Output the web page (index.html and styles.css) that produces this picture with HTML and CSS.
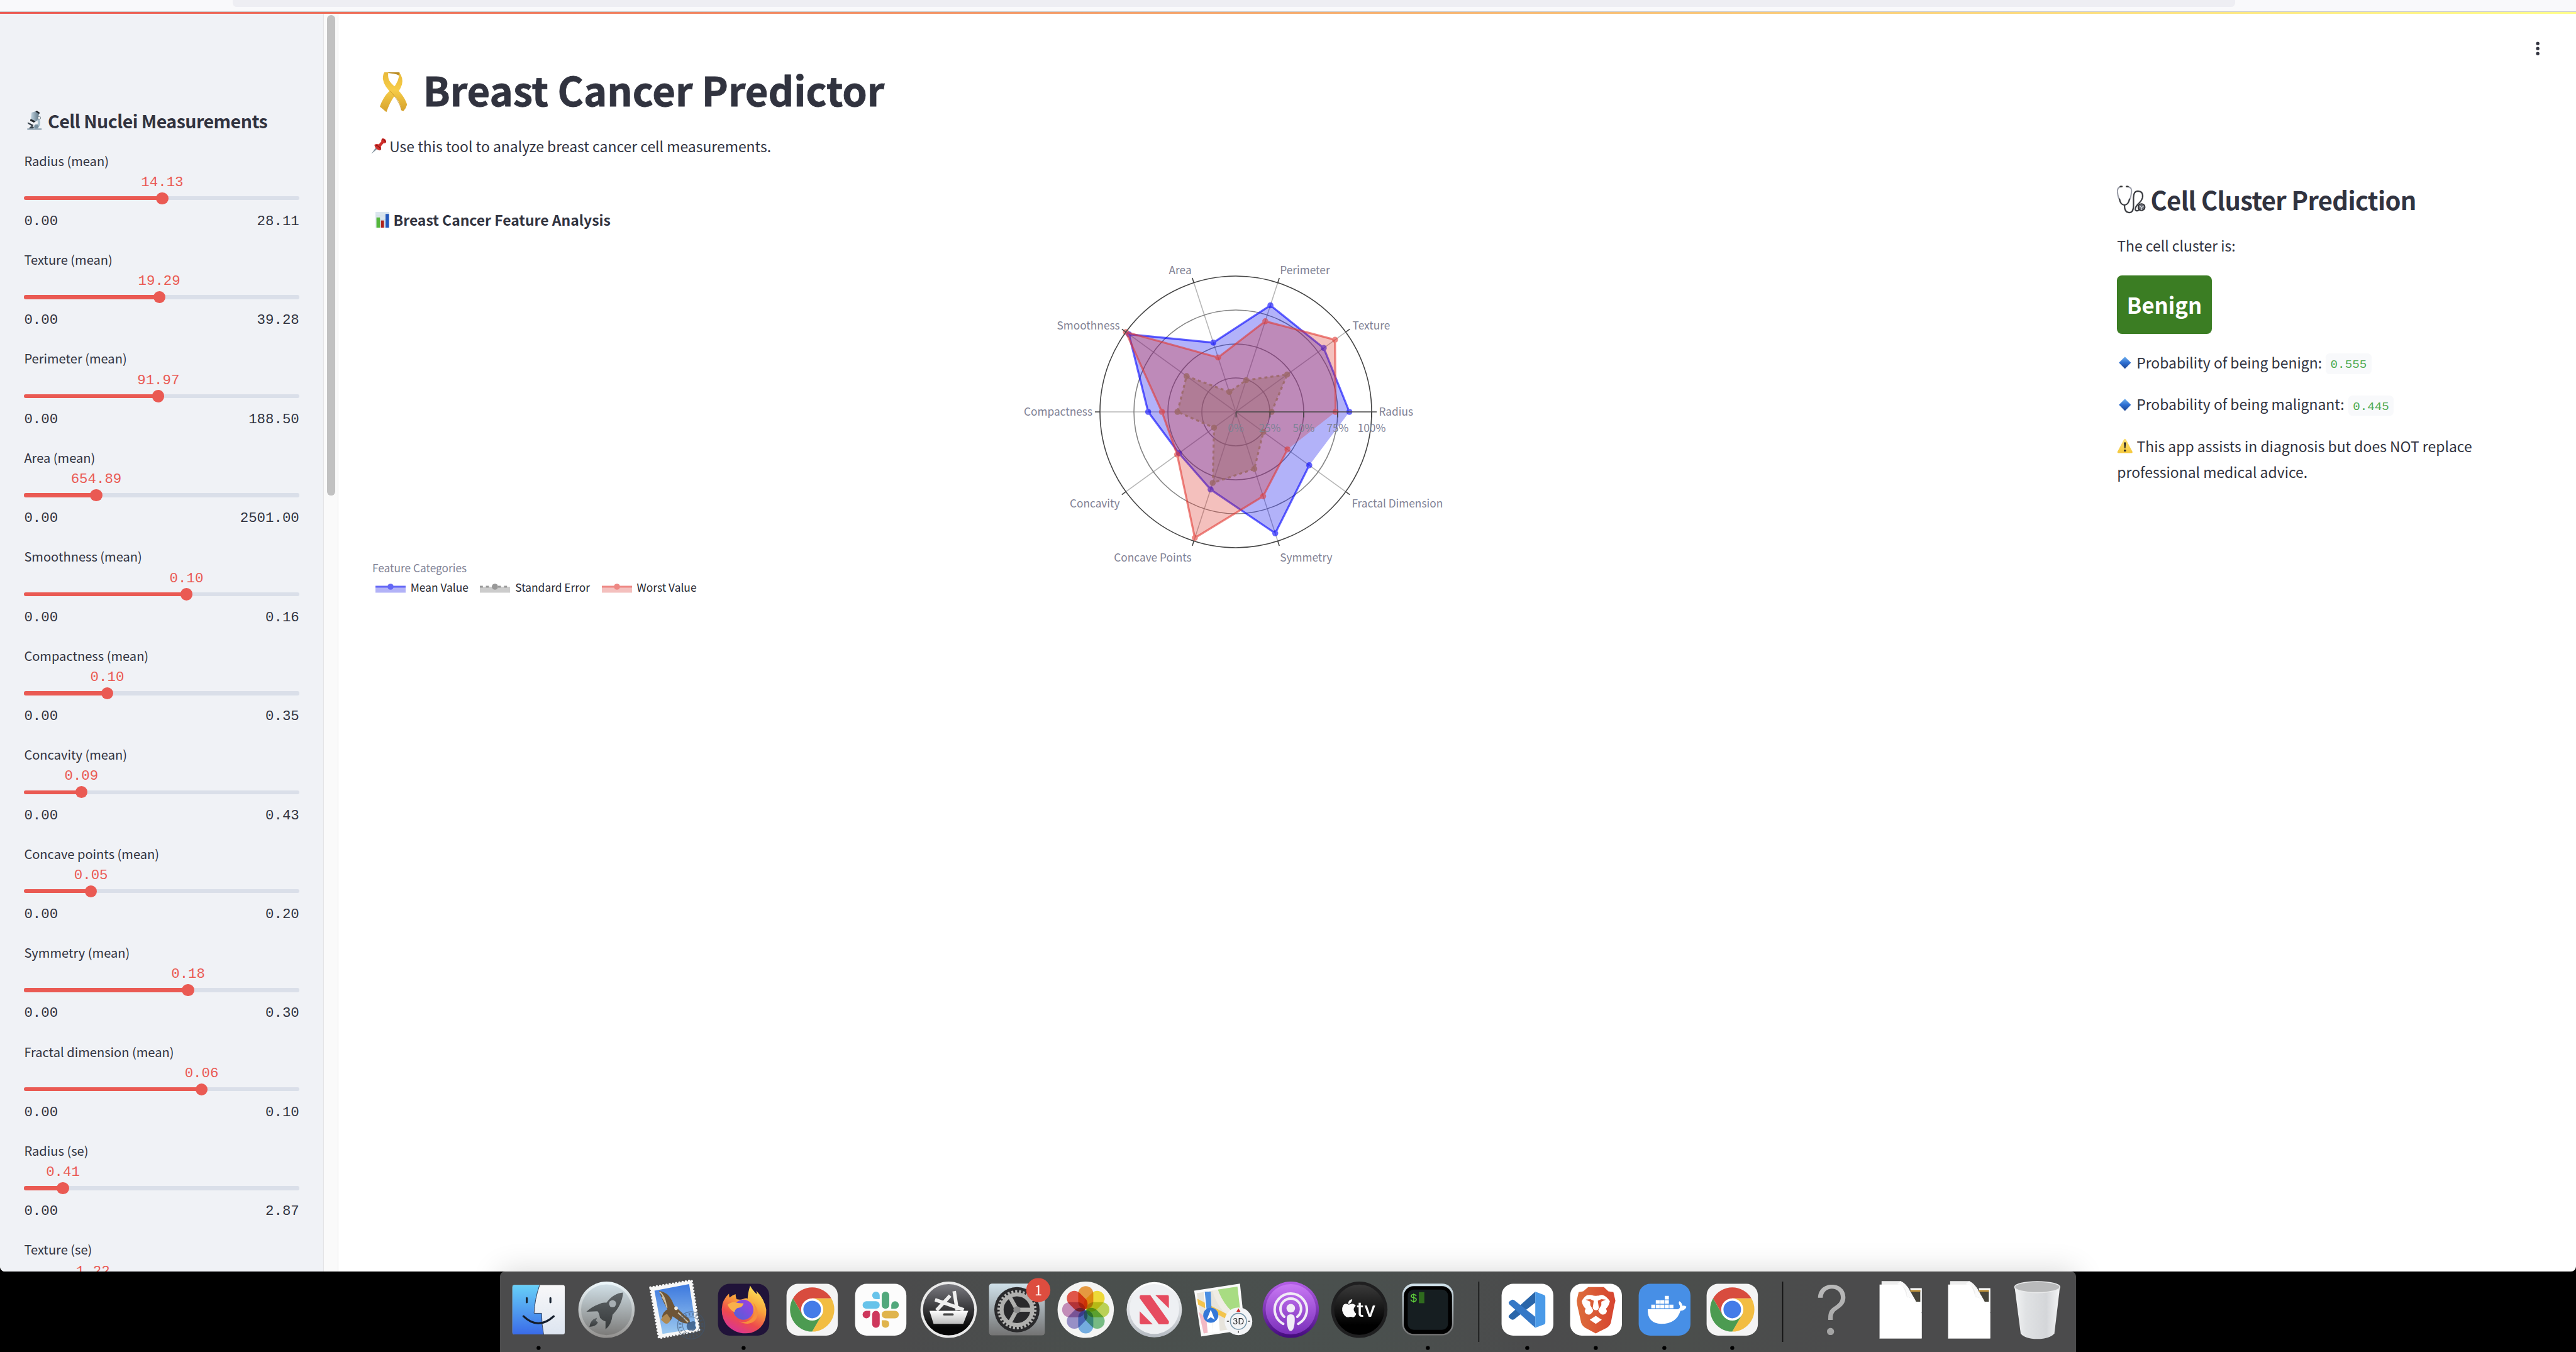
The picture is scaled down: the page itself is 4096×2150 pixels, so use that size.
FILE: index.html
```html
<!DOCTYPE html>
<html lang="en">
<head>
<meta charset="utf-8">
<title>Breast Cancer Predictor</title>
<link rel="stylesheet" href="styles.css">
</head>
<body>
<div class="window">
  <div class="toolbar"><div class="urlbar"></div></div>
  <div class="decoration"></div>
  <div class="app">
    <aside class="sidebar">
      <h2 class="side-title">
        <svg class="i-scope" viewBox="0 0 32 42"><defs><linearGradient id="mt" x1="0" x2="1"><stop offset="0" stop-color="#c3d6e2"/><stop offset="1" stop-color="#5d7484"/></linearGradient></defs><path d="M1 37h30v3H1z" fill="#8fa3b1"/><path d="M21 11q9 8 7 18-2 6-7 8h-9v-3q10-1 11-8 0-7-5-11z" fill="#a9bfcd"/><path d="M10 4l10-3 6 4-4 15-5 4-9-4z" fill="url(#mt)"/><path d="M18 2l3-2 6 4-1 3z" fill="#22262b"/><path d="M8 17l10 5-3 3-8-4z" fill="#1f2428"/><path d="M2 24l12 6-2 3L2 27zM9 32l6 2-2 3H4z" fill="#39444d"/><circle cx="26" cy="15" r="3" fill="#f2f5f7" stroke="#5b6a74"/><circle cx="20" cy="33" r="4.500" fill="#7890a0"/></svg>
        <span>Cell Nuclei Measurements</span>
      </h2>
      <div class="slider"><label>Radius (mean)</label><output style="margin-left:50.2%">14.13</output><div class="track"><i style="width:50.2%"></i></div><div class="range"><span>0.00</span><span>28.11</span></div></div>
      <div class="slider"><label>Texture (mean)</label><output style="margin-left:49.1%">19.29</output><div class="track"><i style="width:49.1%"></i></div><div class="range"><span>0.00</span><span>39.28</span></div></div>
      <div class="slider"><label>Perimeter (mean)</label><output style="margin-left:48.8%">91.97</output><div class="track"><i style="width:48.8%"></i></div><div class="range"><span>0.00</span><span>188.50</span></div></div>
      <div class="slider"><label>Area (mean)</label><output style="margin-left:26.2%">654.89</output><div class="track"><i style="width:26.2%"></i></div><div class="range"><span>0.00</span><span>2501.00</span></div></div>
      <div class="slider"><label>Smoothness (mean)</label><output style="margin-left:59%">0.10</output><div class="track"><i style="width:59%"></i></div><div class="range"><span>0.00</span><span>0.16</span></div></div>
      <div class="slider"><label>Compactness (mean)</label><output style="margin-left:30.2%">0.10</output><div class="track"><i style="width:30.2%"></i></div><div class="range"><span>0.00</span><span>0.35</span></div></div>
      <div class="slider"><label>Concavity (mean)</label><output style="margin-left:20.8%">0.09</output><div class="track"><i style="width:20.8%"></i></div><div class="range"><span>0.00</span><span>0.43</span></div></div>
      <div class="slider"><label>Concave points (mean)</label><output style="margin-left:24.3%">0.05</output><div class="track"><i style="width:24.3%"></i></div><div class="range"><span>0.00</span><span>0.20</span></div></div>
      <div class="slider"><label>Symmetry (mean)</label><output style="margin-left:59.6%">0.18</output><div class="track"><i style="width:59.6%"></i></div><div class="range"><span>0.00</span><span>0.30</span></div></div>
      <div class="slider"><label>Fractal dimension (mean)</label><output style="margin-left:64.5%">0.06</output><div class="track"><i style="width:64.5%"></i></div><div class="range"><span>0.00</span><span>0.10</span></div></div>
      <div class="slider"><label>Radius (se)</label><output style="margin-left:14.1%">0.41</output><div class="track"><i style="width:14.1%"></i></div><div class="range"><span>0.00</span><span>2.87</span></div></div>
      <div class="slider"><label>Texture (se)</label><output style="margin-left:25%">1.22</output></div>
    </aside>
    <div class="scrollbar"><div class="thumb"></div></div>
    <main class="main">
      <header class="header"><svg class="kebab" viewBox="0 0 48 48"><circle cx="24" cy="14" r="3.300"/><circle cx="24" cy="24" r="3.300"/><circle cx="24" cy="34" r="3.300"/></svg></header>
      <h1 class="title">
        <svg class="i-ribbon" viewBox="0 0 54 80"><defs><linearGradient id="rb" x1="0" x2="0" y1="0" y2="1"><stop offset="0" stop-color="#e8b93a"/><stop offset=".45" stop-color="#f7cd48"/><stop offset="1" stop-color="#d5a12c"/></linearGradient></defs><path d="M11 0h28l2 9Q36 3 20 2z" fill="#b98a22"/><path d="M38 0q9 10 6 24Q39 39 27 50 20 60 13 79L0 68Q6 50 18 38 35 26 38 8z" fill="url(#rb)"/><path d="M9 0h8q-3 14 8 24 24 22 29 40-2 8-7 13l-4-1Q41 58 26 44 8 28 6 13 6 4 9 0z" fill="url(#rb)"/><path d="M20 37q18 18 23 38" fill="none" stroke="#b98722" stroke-width="1.200" opacity=".7"/></svg>
        <span>Breast Cancer Predictor</span>
      </h1>
      <p class="intro">
        <svg class="i-pin" viewBox="0 0 30 31"><path d="M0 31l10-14 3 3z" fill="#7d8e9a"/><path d="M6 13q4-3 9-1l5-6q-1-3 2-6 7 0 8 7-2 3-6 3l-5 6q2 5-2 8-9-2-11-11z" fill="#cf2f2b"/><path d="M9 14q7 1 10 9M22 2q5 1 6 6" fill="none" stroke="#8f1517" stroke-width="1.500"/></svg>
        <span>Use this tool to analyze breast cancer cell measurements.</span>
      </p>
      <div class="columns">
        <section class="chart">
          <h3 class="chart-title"><svg class="i-bars" viewBox="0 0 28 32"><path d="M0 0h28v32H0z" fill="#dbe6ee"/><path d="M1 8h26M1 15h26" stroke="#c4d2dc"/><path d="M2 11h7v21H2z" fill="#55b73c"/><path d="M11 17h6v15h-6z" fill="#b0231d"/><path d="M20 4h7v28h-7z" fill="#2459bd"/></svg><span>Breast Cancer Feature Analysis</span></h3>
          <svg class="radar" viewBox="-475 -300 950 590">
            <g class="spokes">
              <path d="M-270 0H0M0 0L218.400-158.700M0 0L83.400-256.800M0 0L-83.400-256.800M0 0L-218.400-158.700M0 0L-218.400 158.700M0 0L-83.400 256.800M0 0L83.400 256.800M0 0L218.400 158.700"/>
            </g>
            <g class="rings"><circle r="67.500"/><circle r="135"/><circle r="202.500"/></g>
            <path class="blue-fill" d="M225.700 0L174.800-127L68.800-211.800L-44.700-137.700L-212.400-154.300L-174.200 0L-113 82.100L-50.100 154.200L78.400 241.300L146 106.100Z"/>
            <g class="blue"><path d="M225.700 0L174.800-127L68.800-211.800L-44.700-137.700L-212.400-154.300L-174.200 0L-113 82.100L-50.100 154.200L78.400 241.300L146 106.100"/><g><circle cx="225.700" r="6"/><circle cx="174.800" cy="-127" r="6"/><circle cx="68.800" cy="-211.800" r="6"/><circle cx="-44.700" cy="-137.700" r="6"/><circle cx="-212.400" cy="-154.300" r="6"/><circle cx="-174.200" r="6"/><circle cx="-113" cy="82.100" r="6"/><circle cx="-50.100" cy="154.200" r="6"/><circle cx="78.400" cy="241.300" r="6"/><circle cx="146" cy="106.100" r="6"/></g></g>
            <path class="gray-fill" d="M71.200 0L102.100-74.200L20.500-63.100L-12.900-39.700L-97.800-71.100L-116 0L-43.300 31.500L-45.900 141.200L36.800 113.400L54.800 39.800Z"/>
            <g class="gray"><path d="M71.200 0L102.100-74.200L20.500-63.100L-12.900-39.700L-97.800-71.100L-116 0L-43.300 31.500L-45.900 141.200L36.800 113.400L54.800 39.800"/><g><circle cx="71.200" r="6"/><circle cx="102.100" cy="-74.200" r="6"/><circle cx="20.500" cy="-63.100" r="6"/><circle cx="-12.900" cy="-39.700" r="6"/><circle cx="-97.800" cy="-71.100" r="6"/><circle cx="-116" r="6"/><circle cx="-43.300" cy="31.500" r="6"/><circle cx="-45.900" cy="141.200" r="6"/><circle cx="36.800" cy="113.400" r="6"/><circle cx="54.800" cy="39.800" r="6"/></g></g>
            <path class="red-fill" d="M198.400 0L197.200-143.300L58.600-180.200L-35.200-108.200L-218.400-158.700L-146.900 0L-116.600 84.800L-81.400 250.400L54.400 167.600L102.700 74.600Z"/>
            <g class="red"><path d="M198.400 0L197.200-143.300L58.600-180.200L-35.200-108.200L-218.400-158.700L-146.900 0L-116.600 84.800L-81.400 250.400L54.400 167.600L102.700 74.600"/><g><circle cx="198.400" r="6"/><circle cx="197.200" cy="-143.300" r="6"/><circle cx="58.600" cy="-180.200" r="6"/><circle cx="-35.200" cy="-108.200" r="6"/><circle cx="-218.400" cy="-158.700" r="6"/><circle cx="-146.900" r="6"/><circle cx="-116.600" cy="84.800" r="6"/><circle cx="-81.400" cy="250.400" r="6"/><circle cx="54.400" cy="167.600" r="6"/><circle cx="102.700" cy="74.600" r="6"/></g></g>
            <circle class="axis" r="270"/>
            <path class="axis" d="M218.400-158.700l8.100-5.900M83.400-256.800l3.100-9.500M-83.400-256.800l-3.100-9.500M-218.400-158.700l-8.100-5.900M-270 0h-10M-218.400 158.700l-8.100 5.900M-83.400 256.800l-3.100 9.500M83.400 256.800l3.100 9.500M218.400 158.700l8.100 5.900M.5 0v11M68 0v11M135 0v11M202.500 0v11M270 0v11"/>
            <path class="axis" d="M0 0H280"/>
            <g class="names">
              <text x="284.300" y="8">Radius</text><text x="232" y="-163.700">Texture</text><text x="87.800" y="-273.500">Perimeter</text><text class="end" x="-88" y="-273.500">Area</text><text class="end" x="-230.500" y="-163.700">Smoothness</text><text class="end" x="-285" y="8">Compactness</text><text class="end" x="-230.500" y="189.500">Concavity</text><text class="end" x="-88" y="297.500">Concave Points</text><text x="87.800" y="297.500">Symmetry</text><text x="230.500" y="189.500">Fractal Dimension</text>
              <text class="mid" x="0" y="40.500">0%</text><text class="mid" x="67.500" y="40.500">25%</text><text class="mid" x="135" y="40.500">50%</text><text class="mid" x="202.500" y="40.500">75%</text><text class="mid" x="270" y="40.500">100%</text>
            </g>
          </svg>
          <div class="legend-title">Feature Categories</div>
          <div class="legend">
            <div class="item"><svg class="key" viewBox="0 0 60 24"><path d="M0 5h60v12H0z" fill="#b2b2f7"/><path d="M0 5h60" stroke="#6468f6" stroke-width="4"/><circle cx="30" cy="5" r="6" fill="#6468f6"/></svg><span>Mean Value</span></div>
            <div class="item"><svg class="key" viewBox="0 0 60 24"><path d="M0 5h60v12H0z" fill="#ccc"/><path d="M0 5h60" stroke="#999" stroke-width="4" stroke-dasharray="6 6"/><circle cx="30" cy="5" r="6" fill="#999"/></svg><span>Standard Error</span></div>
            <div class="item"><svg class="key" viewBox="0 0 60 24"><path d="M0 5h60v12H0z" fill="#f4c0be"/><path d="M0 5h60" stroke="#ee8884" stroke-width="4"/><circle cx="30" cy="5" r="6" fill="#ee8884"/></svg><span>Worst Value</span></div>
          </div>
        </section>
        <section class="prediction">
          <h2 class="pred-title"><svg class="i-steth" viewBox="0 0 58 56"><g fill="none" stroke-linecap="round"><path d="M10 2Q1 2 1 12 2 24 6 29M20 2q10 1 9 10-1 12-4 17" stroke="#9b9ea9" stroke-width="2.600"/><path d="M5 27q2 11 10 12 8-1 10-12M15 39q0 14 9 15 9 0 9-14V24q0-13 9-13 11 1 9 13-2 7-10 14-6 7-4 11 3 3 8-1" stroke="#3b3d42" stroke-width="2.800"/><path d="M7 2h3M19 2h3" stroke="#333" stroke-width="3"/></g><circle cx="49" cy="43" r="6.800" fill="#6b6e76" stroke="#26272b" stroke-width="2"/><path d="M45 40l4 4 4-3M49 44v5" stroke="#d6d9df" stroke-width="1.500" fill="none"/></svg><span>Cell Cluster Prediction</span></h2>
          <p class="text lead">The cell cluster is:</p>
          <div class="badge">Benign</div>
          <p class="text prob"><svg class="i-gem" viewBox="0 0 32 32"><defs><linearGradient id="gm" x1="0" x2="0" y1="0" y2="1"><stop offset="0" stop-color="#6fb0ee"/><stop offset=".5" stop-color="#2e6fd2"/><stop offset="1" stop-color="#1d4592"/></linearGradient></defs><path d="M16 4l12 12-12 12L4 16z" fill="url(#gm)"/></svg><span>Probability of being benign:</span><code>0.555</code></p>
          <p class="text prob"><svg class="i-gem" viewBox="0 0 32 32"><path d="M16 4l12 12-12 12L4 16z" fill="url(#gm)"/></svg><span>Probability of being malignant:</span><code>0.445</code></p>
          <p class="text note"><svg class="i-warn" viewBox="0 0 32 30"><defs><linearGradient id="wn" x1="0" x2="0" y1="0" y2="1"><stop offset="0" stop-color="#fbe27a"/><stop offset="1" stop-color="#f5c83a"/></linearGradient></defs><path d="M16 1q1.500 0 2.500 2L31 27q.5 2.500-2 2.500H3Q.5 29.500 1 27L13.500 3Q14.500 1 16 1z" fill="url(#wn)"/><path d="M14 8h4l-1 12h-2z" fill="#222"/><circle cx="16" cy="24.500" r="2.200" fill="#222"/></svg>This app assists in diagnosis but does NOT replace<br>professional medical advice.</p>
        </section>
      </div>
    </main>
  </div>
</div>
<div class="desktop">
  <svg width="0" height="0" class="defs"><defs>
    <linearGradient id="fb" x1="0" x2="0" y1="0" y2="1"><stop offset="0" stop-color="#67d0f8"/><stop offset="1" stop-color="#3a6be8"/></linearGradient>
    <linearGradient id="fw" x1="0" x2="0" y1="0" y2="1"><stop offset="0" stop-color="#f8f8f9"/><stop offset="1" stop-color="#dde5f0"/></linearGradient>
    <linearGradient id="lo" x1="0" x2="0" y1="0" y2="1"><stop offset="0" stop-color="#eef9fd"/><stop offset="1" stop-color="#92908e"/></linearGradient>
    <linearGradient id="li" x1="0" x2="0" y1="0" y2="1"><stop offset="0" stop-color="#d0dfe6"/><stop offset="1" stop-color="#7c7b79"/></linearGradient>
    <linearGradient id="dk" x1="0" x2="0" y1="0" y2="1"><stop offset="0" stop-color="#5d6366"/><stop offset="1" stop-color="#36393a"/></linearGradient>
    <linearGradient id="sky" x1="0" x2="0" y1="0" y2="1"><stop offset="0" stop-color="#3c78de"/><stop offset="1" stop-color="#9cc9f0"/></linearGradient>
    <linearGradient id="ff" x1=".8" x2=".3" y1="0" y2="1"><stop offset="0" stop-color="#fdeb5c"/><stop offset=".4" stop-color="#f8a23b"/><stop offset=".7" stop-color="#ee4b4c"/><stop offset="1" stop-color="#d8339a"/></linearGradient>
    <linearGradient id="fp" x1="1" x2="0" y1="0" y2="1"><stop offset="0" stop-color="#a63ce0"/><stop offset="1" stop-color="#4a63d8"/></linearGradient>
    <linearGradient id="as" x1="0" x2="0" y1="0" y2="1"><stop offset="0" stop-color="#7a7a80"/><stop offset=".85" stop-color="#050505"/></linearGradient>
    <linearGradient id="bk" x1="0" x2="0" y1="0" y2="1"><stop offset="0" stop-color="#fff"/><stop offset="1" stop-color="#bdbdbd"/></linearGradient>
    <linearGradient id="st" x1="0" x2="0" y1="0" y2="1"><stop offset="0" stop-color="#cfe1ea"/><stop offset="1" stop-color="#737373"/></linearGradient>
    <linearGradient id="nw" x1="0" x2="0" y1="0" y2="1"><stop offset="0" stop-color="#fff"/><stop offset="1" stop-color="#b4bac1"/></linearGradient>
    <linearGradient id="pc" x1="0" x2="0" y1="0" y2="1"><stop offset="0" stop-color="#c878f4"/><stop offset="1" stop-color="#7a2fba"/></linearGradient>
    <linearGradient id="po" x1="0" x2="0" y1="0" y2="1"><stop offset="0" stop-color="#b55fe8"/><stop offset="1" stop-color="#430a7c"/></linearGradient>
    <linearGradient id="tv" x1="0" x2="0" y1="0" y2="1"><stop offset="0" stop-color="#3a3a3a"/><stop offset=".8" stop-color="#000"/></linearGradient>
    <linearGradient id="br" x1="0" x2="1" y1="0" y2="0"><stop offset="0" stop-color="#dd6d3b"/><stop offset="1" stop-color="#d64430"/></linearGradient>
    <linearGradient id="qm" x1="0" x2="0" y1="0" y2="1"><stop offset="0" stop-color="#c2c2c2"/><stop offset="1" stop-color="#9b9b9b"/></linearGradient>
    <linearGradient id="tr" x1="0" x2="1" y1="0" y2="0"><stop offset="0" stop-color="#f2f3f4"/><stop offset=".25" stop-color="#e0e2e4"/><stop offset=".7" stop-color="#d4d6d9"/><stop offset="1" stop-color="#f4f5f6"/></linearGradient>
    <linearGradient id="cu" x1="0" x2="1" y1="1" y2="0"><stop offset="0" stop-color="#fff"/><stop offset=".55" stop-color="#fafafa"/><stop offset="1" stop-color="#d4d4d4"/></linearGradient>
    <g id="chrome"><rect x="17" y="24.500" width="102" height="103" rx="23" fill="#f4f4f4"/><path d="M29.900 53.500A44 44 0 0 1 106.100 53.500H68L48.950 86.500Z" fill="#d84c3e"/><path d="M106.100 53.500A44 44 0 0 1 68 119.500L87.050 86.500 68 53.500Z" fill="#f2bd42"/><path d="M68 119.500A44 44 0 0 1 29.900 53.500L48.950 86.500H87.050Z" fill="#4c9b51"/><circle cx="68" cy="75.500" r="22" fill="#fff"/><circle cx="68" cy="75.500" r="17.500" fill="#447ce8"/></g>
    <g id="doc"><path d="M88 33h23v48H95z" fill="#fff"/><path d="M88 37h20v23H96z" fill="#46443a"/><path d="M88 37h20v3H88z" fill="#c9993a"/><path d="M31 19h38q10 4 18 18l-6 14H31z" fill="#ededed"/><path d="M27 26h42q8 6 12 24 12 2 19 11 8 10 11 22v-2 52H27z" fill="#fff"/><path d="M69 19q10 5 18 19 14 22 17 32Q96 54 81 50V42Q78 28 62 25z" fill="url(#cu)"/><path d="M27 133h83" stroke="#c9c9c9"/></g>
  </defs></svg>
  <div class="dock">
    <svg class="app-icon" viewBox="0 0 136 160"><rect x="16" y="27" width="104" height="98" rx="4" fill="url(#fw)"/><path d="M20 27H70Q60 56 59 83H74Q74 105 78 125H20q-4 0-4-4V31q0-4 4-4z" fill="url(#fb)"/><path d="M70 27Q60 56 59 83H74Q74 105 78 125" fill="none" stroke="#2c3b55" stroke-width="1.200"/><path d="M44.500 53v8M91.500 53v8" stroke="#1a2533" stroke-width="4" stroke-linecap="round"/><path d="M38 89q29 28 60 0" fill="none" stroke="#141d2b" stroke-width="4" stroke-linecap="round"/><circle cx="68" cy="152" r="4"/></svg>
    <svg class="app-icon" viewBox="0 0 136 160"><circle cx="68" cy="76" r="56" fill="url(#lo)"/><circle cx="68" cy="76" r="50.500" fill="url(#li)"/><path d="M101 42Q82 43 68 62q-9-1-13 2Q38 70 28 80l22-1q3 2 5 13 5 6 11 7l0 16Q78 106 80 86 99 67 101 42z" fill="url(#dk)"/><circle cx="80" cy="64" r="7" fill="#a7afb3"/><path d="M49 92Q36 96 34 110q14-1 17-9l-4-3z" fill="url(#dk)"/></svg>
    <svg class="app-icon" viewBox="0 0 136 160"><path d="M19 32L101 18 116 117 36 132Z" fill="#f7f7f7"/><path d="M19 32L101 18 116 117 36 132Z" fill="none" stroke="#f7f7f7" stroke-width="5" stroke-dasharray="0 6.500" stroke-linecap="round"/><path d="M27 38L96 25 110 113 43 124Z" fill="url(#sky)"/><path d="M36 38q18 3 26 20 5 14 10 15 6 5 17 16 10 4 8 14-14 2-25-8l-9-6q-4 14-12 9l-9-8q2-10 11-15-10-16-17-37z" fill="#6e5536"/><path d="M37 40q10 8 13 25M42 50q7 10 10 22M74 82q9 8 20 19" stroke="#cbbfa6" stroke-width="2.500" fill="none"/><path d="M52 84q-9 4-12 12l8 7q8 3 11-9z" fill="#b08a52"/><circle cx="70" cy="73" r="3.500" fill="#f1ece0"/><g fill="none" stroke="#3f5570" opacity=".55"><circle cx="100" cy="107" r="27" stroke-width="2"/><circle cx="100" cy="107" r="17" stroke-width="1.500"/><circle cx="100" cy="107" r="22" stroke-width="5" stroke-dasharray="3 4"/></g><path d="M100 100q7-3 9 2-4 6 1 9-3 9-10 6-7 2-9-7 0-11 9-10z" fill="#35567f" opacity=".8"/></svg>
    <svg class="app-icon" viewBox="0 0 136 160"><rect x="17" y="24.500" width="102" height="103" rx="23" fill="#201339"/><path d="M81 28q4 8 13 17 1-3-1-7 17 17 20 38 1 36-30 46-31 5-50-18-12-18-7-40 4-12 13-20 0 5 1 8 5-5 12-7 0 5 2 10 8 2 12 0 8-3 10-1 0-10 5-26z" fill="url(#ff)"/><circle cx="67.500" cy="76" r="20" fill="url(#fp)"/><path d="M36 66q8-6 14-5 8 3 18 2-2 8-9 9-8 1-9 9-9-4-14-15z" fill="#f9b04a"/><path d="M87 62q10 24-9 36-11 5-20 0 20 12 33-1 12-16-4-35z" fill="#f78f3d"/><circle cx="68" cy="152" r="4"/></svg>
    <svg class="app-icon" viewBox="0 0 136 160"><use href="#chrome"/></svg>
    <svg class="app-icon" viewBox="0 0 136 160"><rect x="17" y="24.500" width="102" height="103" rx="23" fill="#fcfcfc"/><g fill="#67c3ea"><path d="M66 55h-7.500A7.500 7.500 0 1 1 66 47.500z"/><rect x="32" y="59" width="34" height="15" rx="7.500"/></g><g fill="#52a87c"><rect x="70" y="40" width="15" height="34" rx="7.500"/><path d="M89 74v-7.500a7.500 7.500 0 1 1 7.500 7.500z"/></g><g fill="#e0b44c"><rect x="70" y="78" width="34" height="15" rx="7.500"/><path d="M70 97h7.500A7.500 7.500 0 1 1 70 104.500z"/></g><g fill="#ce375c"><rect x="51" y="78" width="15" height="34" rx="7.500"/><path d="M47 78v7.500A7.500 7.500 0 1 1 39.500 78z"/></g></svg>
    <svg class="app-icon" viewBox="0 0 136 160"><circle cx="68" cy="76" r="56" fill="#e9e9e9"/><circle cx="68" cy="76" r="51" fill="url(#as)"/><g stroke="#efefef" stroke-width="7"><path d="M44 77L71 48M41 56L98 76M79 39l6 38"/></g><path d="M30 78h77l-10 26H38z" fill="url(#bk)"/><rect x="57" y="83" width="21" height="4.500" rx="2" fill="#444"/></svg>
    <svg class="app-icon" viewBox="0 0 136 160"><rect x="12" y="24" width="111" height="103" rx="6" fill="url(#st)"/><circle cx="67.500" cy="76" r="45" fill="#2a2a2c"/><circle cx="67.500" cy="76" r="36" fill="none" stroke="#b4b4b2" stroke-width="6" stroke-dasharray="4 3.540"/><circle cx="67.500" cy="76" r="30.500" fill="none" stroke="#b0b0ae" stroke-width="8"/><path d="M67.500 76h30M67.500 76l-15-27M67.500 76l-15 27" stroke="#b0b0ae" stroke-width="8"/><circle cx="67.500" cy="76" r="7" fill="#8c8c8c"/><circle cx="110" cy="37" r="24" fill="#dd4d3f"/><text class="badge-num" x="110" y="47">1</text></svg>
    <svg class="app-icon" viewBox="0 0 136 160"><circle cx="68" cy="76" r="56" fill="#f4f4f3"/><g class="petals"><rect x="53" y="29" width="30" height="46" rx="15" fill="#f0a043"/><rect x="53" y="29" width="30" height="46" rx="15" fill="#f8e33c" transform="rotate(45 68 76)"/><rect x="53" y="29" width="30" height="46" rx="15" fill="#c3da5a" transform="rotate(90 68 76)"/><rect x="53" y="29" width="30" height="46" rx="15" fill="#7cc48a" transform="rotate(135 68 76)"/><rect x="53" y="29" width="30" height="46" rx="15" fill="#79b4ea" transform="rotate(180 68 76)"/><rect x="53" y="29" width="30" height="46" rx="15" fill="#9e97d0" transform="rotate(225 68 76)"/><rect x="53" y="29" width="30" height="46" rx="15" fill="#cb92c0" transform="rotate(270 68 76)"/><rect x="53" y="29" width="30" height="46" rx="15" fill="#ea5b4c" transform="rotate(315 68 76)"/></g></svg>
    <svg class="app-icon" viewBox="0 0 136 160"><circle cx="68" cy="76" r="55" fill="url(#nw)"/><circle cx="68" cy="74.500" r="49.500" fill="#eef0f3"/><path d="M42 47H60L97 99V102q0 3-3 3H77L39 53V50q0-3 3-3zM70 47H94q3 0 3 3V73zM39 79L65 105H42q-3 0-3-3z" fill="#e64b5f"/></svg>
    <svg class="app-icon" viewBox="0 0 136 160"><path d="M11 38L102 24 112 116 25 129Z" fill="#fafafa"/><path d="M16 43L97 30 106 111 30 123Z" fill="#e7e4dc"/><path d="M58 36L97 30 104 90Q72 78 58 36z" fill="#a8dc82"/><path d="M47 38l11-2q14 38 47 58v10Q62 88 47 38z" fill="#efece4"/><path d="M17 54L106 100v10L19 66z" fill="#f3c44d"/><path d="M20 80l22 20 2 20-14 3z" fill="#f3b9c4"/><path d="M40 39l-10 2 8 81 10-1z" fill="#fff"/><path d="M32 40h12l2 48H37z" fill="#4b8fe2"/><path d="M46 88l14 4 2 27-14 2z" fill="#fff"/><circle cx="44" cy="87" r="15" fill="#3478d8"/><path d="M44 76l8 20-8-5-8 5z" fill="#fff"/><circle cx="99" cy="99" r="27.500" fill="#f3f4f6"/><circle cx="99" cy="99" r="16" fill="none" stroke="#7898ac" stroke-width="2"/><path d="M99 73l4 7h-8z" fill="#cf2a26"/><path d="M76 99h4M118 99h4M99 118v4" stroke="#333" stroke-width="1.500"/><text class="map-3d" x="99" y="105">3D</text></svg>
    <svg class="app-icon" viewBox="0 0 136 160"><circle cx="68" cy="76" r="56" fill="url(#po)"/><circle cx="68" cy="75" r="50" fill="url(#pc)"/><g fill="none" stroke="#f1ecf6" stroke-width="5" stroke-linecap="round"><path d="M53 104A32 32 0 1 1 83 104"/><path d="M55 90A20.500 20.500 0 1 1 81 90"/></g><circle cx="68" cy="73" r="8.500" fill="#f1ecf6"/><path d="M60 94q0-9 8-9t8 9q0 12-3 20-2 4-5 4t-5-4q-3-8-3-20z" fill="#f1ecf6"/></svg>
    <svg class="app-icon" viewBox="0 0 136 160"><circle cx="68" cy="76" r="56" fill="#1f1f20"/><circle cx="68" cy="76" r="50" fill="url(#tv)"/><path d="M54 55q-1 8-8 10-1-8 8-10zM47 66q4-2 8-2 4 1 6 4-5 4-4 9 1 4 5 7-3 7-7 7-4-2-9 0-8 0-12-13-1-13 7-14 3 0 6 2z" fill="#fafafa"/><text class="tv" x="63" y="90">tv</text></svg>
    <svg class="app-icon" viewBox="0 0 136 160"><rect x="17" y="24" width="102" height="103" rx="23" fill="url(#st)"/><rect x="20" y="29" width="96" height="95" rx="20" fill="#000"/><rect x="28" y="36" width="80" height="80" rx="12" fill="#161e21"/><text class="prompt" x="32.500" y="60">$</text><rect x="50" y="41" width="11" height="22" fill="#2f6b1e"/><circle cx="68" cy="152" r="4"/></svg>
    <svg class="sep" viewBox="0 0 61.500 160"><path d="M33 20v120" stroke="#111" stroke-width="2"/></svg>
    <svg class="app-icon" viewBox="0 0 136 160"><rect x="17" y="24.500" width="103" height="103" rx="23" fill="#fff"/><path d="M84 40L32 87q-2 3 0 5l4 3q3 2 6 0L84 62z" fill="#2a66aa"/><path d="M84 112L32 65q-2-3 0-5l4-3q3-2 6 0L84 90z" fill="#3578c6"/><path d="M84 40l18 7q2 1 2 4v50q0 3-2 4l-18 7z" fill="#4a9ae8"/><circle cx="68" cy="152" r="4"/></svg>
    <svg class="app-icon" viewBox="0 0 136 160"><rect x="17" y="24.500" width="103" height="103" rx="23" fill="#fff"/><path d="M53 31H84L93 39.500 103 41 107 58 105 66 98 102Q96 108 90 112L68 123 47 112Q41 108 39 102L31 66 30 58 34 41 43 39.500Z" fill="url(#br)"/><path d="M51 47q6-1 9 0 8 3 17 0 4-1 8 1 6 3 11 11-2 10-8 15 4 5 0 9-3 4-9 2-5-3-6-8l6-10v-7l9-4-9-1-7 3 2 14q-1 5-6 5t-6-5l2-14-7-3-9 1 9 4v7l6 10q-1 5-6 8-6 2-9-2-4-4 0-9-6-5-8-15 5-9 11-12z" fill="#fff"/><path d="M68 88l12 8-12 8-12-8z" fill="#fff"/><circle cx="68" cy="152" r="4"/></svg>
    <svg class="app-icon" viewBox="0 0 136 160"><rect x="17" y="24.500" width="103" height="103" rx="23" fill="#478fe6"/><path d="M35 75H94q6-1 5-7-4-6-1-9 5 3 6 9 5-1 8 2-3 8-12 8-8 26-38 26Q34 103 35 75z" fill="#fff"/><path d="M42 66h8v7h-8zM51 66h8v7h-8zM60 66h8v7h-8zM69 66h8v7h-8zM78 66h8v7h-8zM51 57h8v7h-8zM60 57h8v7h-8zM69 57h8v7h-8zM69 48.500h8v7h-8z" fill="#fff"/><circle cx="68" cy="152" r="4"/></svg>
    <svg class="app-icon" viewBox="0 0 136 160"><use href="#chrome"/><circle cx="68" cy="152" r="4"/></svg>
    <svg class="sep" viewBox="0 0 61.500 160"><path d="M32 20v120" stroke="#111" stroke-width="2"/></svg>
    <svg class="app-icon" viewBox="0 0 136 160"><text class="missing" x="69" y="125">?</text></svg>
    <svg class="app-icon" viewBox="0 0 136 160"><use href="#doc"/></svg>
    <svg class="app-icon" viewBox="0 0 136 160"><use href="#doc"/></svg>
    <svg class="app-icon" viewBox="0 0 136 160"><path d="M23 31L35 123q8 11 33 11t34-11L113 31z" fill="url(#tr)"/><ellipse cx="68" cy="31" rx="45" ry="11" fill="#b9babb" stroke="#e9eaeb" stroke-width="2"/></svg>
  </div>
</div>
</body>
</html>
```
FILE: styles.css
```css
/* 1rem = 10 layout units */
html { font-size: 8px; }
* { box-sizing: border-box; }
body {
  margin: 0;
  width: 100%;
  height: 100vh;
  overflow: hidden;
  display: flex;
  flex-direction: column;
  background: #000;
  color: #31333f;
  font-family: "Noto Sans CJK SC", "Noto Sans", sans-serif;
}
h1, h2, h3, p { margin: 0; }
svg { display: block; flex: none; }

.window {
  height: 252.8rem;
  flex: none;
  display: flex;
  flex-direction: column;
  overflow: hidden;
  background: #fff;
  border-radius: 0 0 1rem 1rem;
}
.toolbar {
  height: 2.4rem;
  flex: none;
  background: #f9f9fb;
  border-bottom: .2rem solid #c9c9cb;
  padding-left: 46.2rem;
}
.urlbar { width: 398rem; height: 1.4rem; background: #eeeef3; border-radius: 0 0 .8rem .8rem; }
.decoration { height: .4rem; flex: none; background: linear-gradient(90deg, #eb5a53, #fffd8b); }
.app { flex: 1; display: flex; min-height: 0; }

/* sidebar */
.sidebar {
  width: 64.4rem;
  flex: none;
  overflow: hidden;
  background: #f0f2f6;
  border-right: .2rem solid #e4e4e6;
  padding: 18.2rem 4.8rem 0;
}
.side-title {
  display: flex;
  align-items: center;
  height: 6rem;
  margin-bottom: 2.7rem;
  font-size: 3.57rem;
  letter-spacing: -.065rem;
  line-height: 6rem;
  white-space: nowrap;
}
.i-scope { width: 3.2rem; height: 4rem; margin: 0 1.1rem 0 .4rem; }
.slider { height: 19.68rem; }
.slider label { display: block; font-size: 2.51rem; line-height: 4.4rem; }
.slider output {
  display: block;
  width: max-content;
  transform: translateX(-50%);
  color: #ea5a53;
  font: 2.8rem/4.3rem "Liberation Mono", monospace;
}
.track { height: .8rem; margin-top: .6rem; border-radius: .4rem; background: #dadfe9; }
.track i { display: block; position: relative; height: .8rem; border-radius: .4rem; background: #ea5a53; }
.track i::after {
  content: "";
  position: absolute;
  right: -1.2rem;
  top: -.8rem;
  width: 2.4rem;
  height: 2.4rem;
  border-radius: 50%;
  background: #ea5a53;
}
.range { display: flex; justify-content: space-between; margin-top: 1.95rem; font: 2.8rem/4.6rem "Liberation Mono", monospace; }

.scrollbar { width: 2.8rem; flex: none; background: #fafafa; border-right: .2rem solid #ebebeb; padding: .2rem 0 0 .6rem; }
.thumb { width: 1.6rem; height: 95.5rem; border-radius: .8rem; background: #c1c1c1; }

/* main area */
.main { flex: 1; min-width: 0; }
.header { height: 8.96rem; display: flex; justify-content: flex-end; padding: 4.4rem 5.2rem 0 0; }
.kebab { width: 4.8rem; height: 4.8rem; fill: #31333f; }
.title {
  display: flex;
  padding-left: 8.3rem;
  height: 12rem;
  font-size: 7.9rem;
  line-height: 12rem;
  white-space: nowrap;
  -webkit-text-stroke: .1rem #31333f;
}
.i-ribbon { width: 5.4rem; height: 8rem; margin: 2.65rem 3.2rem 0 0; }
.intro { display: flex; margin-top: 2.69rem; padding-left: 6.5rem; height: 5.2rem; font-size: 2.867rem; line-height: 5.2rem; }
.i-pin { width: 3.1rem; height: 3.1rem; margin: 1.1rem .6rem 0 0; }
.columns { display: flex; }

.chart { width: 343.2rem; margin-left: 6.8rem; padding-top: 9.5rem; flex: none; }
.chart-title { display: flex; padding-left: .6rem; font-size: 2.867rem; line-height: 5rem; height: 5rem; }
.i-bars { width: 2.8rem; height: 3.2rem; margin: .95rem .8rem 0 0; }
.radar { width: 95rem; height: 59rem; margin: 5.75rem auto 0; overflow: visible; }
.spokes { stroke: #b7b7b7; stroke-width: 2; fill: none; }
.rings { stroke: #858585; stroke-width: 2; fill: none; }
.axis { stroke: #444; stroke-width: 2; fill: none; }
.blue, .red, .gray { stroke-width: 4; fill: none; stroke-linejoin: round; }
.blue { stroke: #0000ff; opacity: .6; }
.blue circle { fill: #0000ff; stroke: none; }
.blue-fill { fill: rgba(0, 0, 235, .3); }
.gray { stroke: #808080; opacity: .8; }
.gray path { stroke-dasharray: 6 6; }
.gray circle { fill: #808080; stroke: none; }
.gray-fill { fill: rgba(128, 128, 128, .4); }
.red { stroke: #e33932; opacity: .6; }
.red circle { fill: #e33932; stroke: none; }
.red-fill { fill: rgba(218, 45, 38, .3); }
.names { fill: #7f8295; font-size: 21.6px; }
.names .end { text-anchor: end; }
.names .mid { text-anchor: middle; }
.legend-title { height: 3.6rem; line-height: 3.6rem; font-size: 2.16rem; color: #7f8295; margin-top: .2rem; }
.legend { display: flex; gap: 2.3rem; margin-top: .36rem; padding-left: .6rem; font-size: 2.17rem; line-height: 3.6rem; color: #262730; }
.item { display: flex; gap: 1rem; }
.key { width: 6rem; height: 2.4rem; margin-top: 1.1rem; overflow: visible; }

/* prediction column */
.prediction { margin-left: 3.6rem; padding-top: 3.97rem; }
.pred-title { display: flex; font-size: 5rem; letter-spacing: -.085rem; line-height: 8rem; height: 8rem; white-space: nowrap; }
.i-steth { width: 5.8rem; height: 5.6rem; margin: 1.3rem .85rem 0 0; }
.text { font-size: 2.867rem; line-height: 5.2rem; white-space: nowrap; }
.lead { margin-top: 2.63rem; }
.badge {
  width: 18.8rem;
  height: 11.7rem;
  margin-top: 3.25rem;
  border-radius: 1rem;
  background: #3b7d23;
  color: #fff;
  font-size: 4.34rem;
  font-weight: 700;
  line-height: 11.6rem;
  text-align: center;
}
.prob { display: flex; height: 5.2rem; margin-top: 3.05rem; }
.prob + .prob { margin-top: 3.15rem; }
.i-gem { width: 3.2rem; height: 3.2rem; margin: 1.05rem .65rem 0 0; }
.prob code {
  height: 4.1rem;
  margin: .8rem 0 0 .75rem;
  padding: 0 .95rem;
  border-radius: .8rem;
  background: #f8f9fb;
  color: #4fab52;
  font: 2.4rem/4.5rem "Liberation Mono", monospace;
}
.note { margin-top: 3.2rem; line-height: 5.07rem; }
.i-warn { display: inline-block; width: 3.2rem; height: 3rem; margin-right: .7rem; vertical-align: -.25rem; }

/* dock */
.desktop { flex: 1; display: flex; justify-content: center; }
.defs { position: absolute; }
.dock {
  position: relative;
  z-index: 1;
  flex: none;
  display: flex;
  width: 313.2rem;
  height: 16rem;
  padding-left: .8rem;
  border-radius: 1rem 1rem 0 0;
  background: linear-gradient(90deg, #4b4b4c 0, #4b4b4c 25%, #4a4f4d 38%, #4a504e 55%, #4b4b4c 66%, #4b4e4c 75%, #4b4b4c 85%);
  box-shadow: 0 0 6rem rgba(0, 0, 0, .16);
}
.app-icon { width: 13.6rem; height: 16rem; }
.sep { width: 6.15rem; height: 16rem; }
.petals rect { mix-blend-mode: multiply; }
.badge-num { fill: #fff; font-size: 27px; text-anchor: middle; }
.map-3d { fill: #222; font: 17px Inter, sans-serif; text-anchor: middle; }
.tv { fill: #fafafa; font: 500 40px Inter, sans-serif; }
.prompt { fill: #5fd13c; font: 24px "Liberation Mono", monospace; }
.missing { fill: url(#qm); font: 300 134px Inter, sans-serif; text-anchor: middle; }
```
